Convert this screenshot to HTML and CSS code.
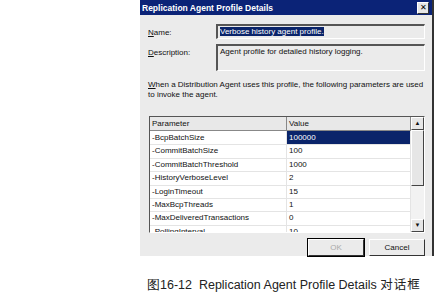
FILE: index.html
```html
<!DOCTYPE html>
<html lang="zh">
<head>
  <meta charset="UTF-8" />
  <title>Replication Agent Profile Details</title>
  <link rel="stylesheet" href="styles.css">
</head>
<body>
  <div class="dialog">
    <div class="titlebar">
      <span class="title">Replication Agent Profile Details</span>
      <span class="close">&#x2715;</span>
    </div>

    <div class="content">
      <div class="field">
        <span class="label"><u>N</u>ame:</span>
        <div class="box name-box"><span class="sel">Verbose history agent profile.</span></div>
      </div>
      <div class="field">
        <span class="label"><u>D</u>escription:</span>
        <div class="box desc-box">Agent profile for detailed history logging.</div>
      </div>

      <p class="info"><u>W</u>hen a Distribution Agent uses this profile, the following parameters are used to invoke the agent.</p>

      <div class="list-box">
        <div class="list">
          <div class="row head"><div>Parameter</div><div>Value</div></div>
          <div class="row"><div>-BcpBatchSize</div><div class="picked">100000</div></div>
          <div class="row"><div>-CommitBatchSize</div><div>100</div></div>
          <div class="row"><div>-CommitBatchThreshold</div><div>1000</div></div>
          <div class="row"><div>-HistoryVerboseLevel</div><div>2</div></div>
          <div class="row"><div>-LoginTimeout</div><div>15</div></div>
          <div class="row"><div>-MaxBcpThreads</div><div>1</div></div>
          <div class="row"><div>-MaxDeliveredTransactions</div><div>0</div></div>
          <div class="row"><div>-PollingInterval</div><div>10</div></div>
        </div>
        <div class="scrollbar">
          <div class="sb-btn">&#x25B2;</div>
          <div class="sb-thumb"></div>
          <div class="sb-track"></div>
          <div class="sb-btn">&#x25BC;</div>
        </div>
      </div>

      <div class="buttons">
        <button class="btn default" disabled>OK</button>
        <button class="btn">Cancel</button>
      </div>
    </div>
  </div>

  <p class="caption">图16-12&nbsp; Replication Agent Profile Details <span class="cjk">对话框</span></p>
</body>
</html>
```

FILE: styles.css
```css
body { margin: 0; background: #fff; font-family: "Liberation Sans", Arial, sans-serif; }

.dialog { margin-left: 140px; width: 292px; height: 256px; background: #ebebeb; border-right: 2px solid #333; font-size: 8px; color: #111; }
.titlebar { height: 15px; background: #0b2377; display: flex; align-items: center; justify-content: space-between; padding: 0 3px 0 2px; }
.title { color: #fff; font-weight: bold; font-size: 8.5px; }
.close { width: 10px; height: 10px; background: #e6e6e6; border: 1px solid #fff; border-right-color: #333; border-bottom-color: #333; font-size: 8px; line-height: 10px; text-align: center; color: #000; }

.content { padding: 9px 7px 0 8px; }
.field { display: flex; align-items: flex-start; margin-bottom: 5px; }
.label { width: 68px; padding-top: 4px; }
.box { flex: 1; border: 1px solid #888; border-top: 2px solid #555; border-left: 2px solid #555; border-right-color: #fff; border-bottom-color: #fff; padding: 1px 2px; }
.name-box { height: 10px; }
.desc-box { height: 22px; }
.sel { background: #0a246a; color: #fff; }

.info { margin: 9px 0 17px; line-height: 9.5px; }

.list-box { display: flex; height: 115px; margin-left: 1px; border: 1px solid #555; border-right-color: #fff; border-bottom-color: #fff; background: #fff; }
.list { flex: 1; overflow: hidden; }
.row { display: grid; grid-template-columns: 137px 1fr; height: 13.4px; line-height: 13.4px; }
.row div { padding-left: 2px; border-bottom: 1px solid #e4e4e4; border-right: 1px solid #e4e4e4; box-sizing: border-box; white-space: nowrap; }
.row.head { height: 14px; background: #e8e8e8; }
.row.head div { border-right: 1px solid #888; border-bottom: 1px solid #888; }
.picked { background: #0a246a; color: #fff; }

.scrollbar { width: 13px; display: flex; flex-direction: column; background: #f2f2f2; }
.sb-btn { height: 13px; background: #e6e6e6; border: 1px solid #fff; border-right-color: #444; border-bottom-color: #444; box-sizing: border-box; font-size: 6px; line-height: 11px; text-align: center; }
.sb-thumb { height: 56px; background: #e6e6e6; border: 1px solid #fff; border-right-color: #444; border-bottom-color: #444; box-sizing: border-box; }
.sb-track { flex: 1; }

.buttons { display: flex; justify-content: flex-end; gap: 5px; margin-top: 6px; }
.btn { width: 56px; height: 17px; font: 8px "Liberation Sans", Arial, sans-serif; background: #ebebeb; border: 1px solid #fff; border-right-color: #333; border-bottom-color: #333; padding: 0; color: #111; }
.btn.default { outline: 1px solid #000; color: #aaa; }

.caption { margin: 18px 0 0 147px; font-size: 12.5px; color: #222; }
.cjk { font-family: "Noto Sans CJK SC", sans-serif; letter-spacing: 1px; }
```
